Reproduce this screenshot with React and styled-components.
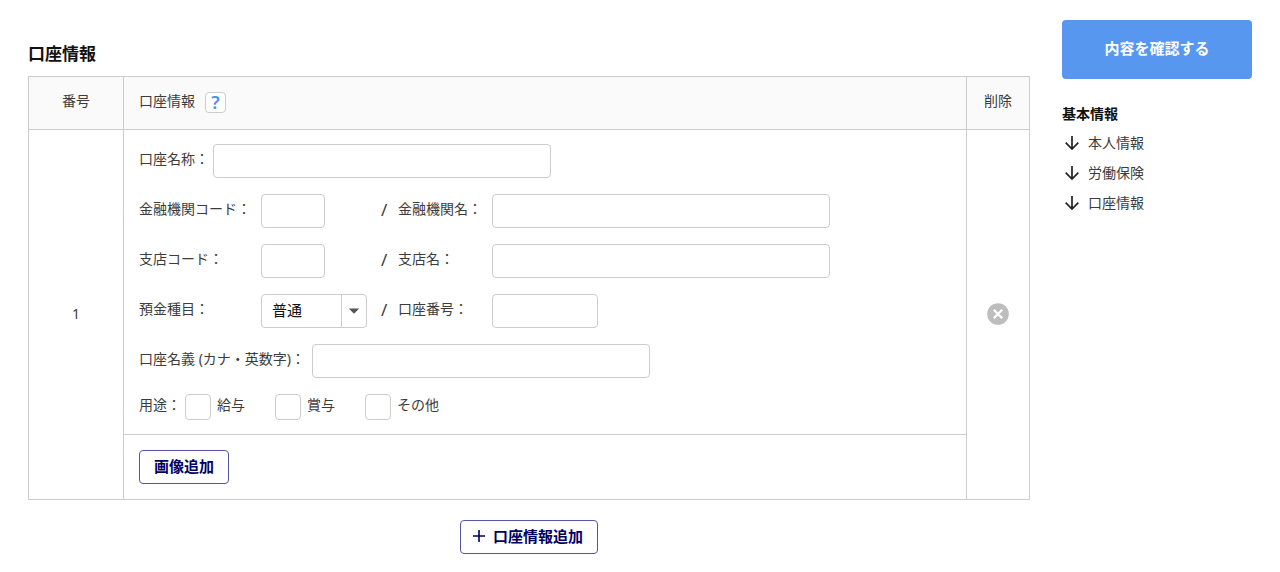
import styled, { createGlobalStyle } from 'styled-components';
import { useState } from 'react';


export default function App(){

    const [kinds, setKinds] = useState({ salary: false, bonus: false, other: false });
    const [accountType, setAccountType] = useState('普通');

function toggleKind(e){
    setKinds({ ...kinds, [e.target.name]: e.target.checked });
}

    return (
        <Page>
            <GlobalStyle />
            <Main>
                <Title>口座情報</Title>
                <Table>
                    <thead>
                        <tr>
                            <NumberHead>番号</NumberHead>
                            <InfoHead>
                                <HeadLine>
                                    <HeadText>口座情報</HeadText>
                                    <HelpButton type="button" aria-label="ヘルプ">?</HelpButton>
                                </HeadLine>
                            </InfoHead>
                            <DeleteHead>削除</DeleteHead>
                        </tr>
                    </thead>
                    <tbody>
                        <tr>
                            <SideCell rowSpan={2}>1</SideCell>
                            <FormCell>
                                <Form>
                                    <Row>
                                        <Label htmlFor="name">口座名称：</Label>
                                        <Input id="name" type="text" $width="338px" />
                                    </Row>
                                    <Row>
                                        <Label htmlFor="bankCode" $width="118px">金融機関コード：</Label>
                                        <Slot><Input id="bankCode" type="text" $width="64px" /></Slot>
                                        <Slash>/</Slash>
                                        <Label htmlFor="bankName" $width="90px">金融機関名：</Label>
                                        <Input id="bankName" type="text" $width="338px" />
                                    </Row>
                                    <Row>
                                        <Label htmlFor="branchCode" $width="118px">支店コード：</Label>
                                        <Slot><Input id="branchCode" type="text" $width="64px" /></Slot>
                                        <Slash>/</Slash>
                                        <Label htmlFor="branchName" $width="90px">支店名：</Label>
                                        <Input id="branchName" type="text" $width="338px" />
                                    </Row>
                                    <Row>
                                        <Label htmlFor="accountType" $width="118px">預金種目：</Label>
                                        <Slot>
                                            <SelectBox>
                                                <Select
                                                    id="accountType"
                                                    value={accountType}
                                                    onChange={(e) => setAccountType(e.target.value)}
                                                >
                                                    <option>普通</option>
                                                </Select>
                                                <Arrow>
                                                    <svg width="12" height="6" viewBox="0 0 12 6" aria-hidden="true">
                                                        <path d="M0.8 0.4h10.4L6 5.8z" fill="#555" />
                                                    </svg>
                                                </Arrow>
                                            </SelectBox>
                                        </Slot>
                                        <Slash>/</Slash>
                                        <Label htmlFor="accountNumber" $width="90px">口座番号：</Label>
                                        <Input id="accountNumber" type="text" $width="106px" />
                                    </Row>
                                    <Row>
                                        <Label htmlFor="holder" $width="169px">口座名義 (カナ・英数字)：</Label>
                                        <Input id="holder" type="text" $width="338px" />
                                    </Row>
                                    <Row>
                                        <Label as="span">用途：</Label>
                                        <Checks>
                                            <Check>
                                                <Checkbox type="checkbox" name="salary" checked={kinds.salary} onChange={toggleKind} />
                                                <CheckText>給与</CheckText>
                                            </Check>
                                            <Check>
                                                <Checkbox type="checkbox" name="bonus" checked={kinds.bonus} onChange={toggleKind} />
                                                <CheckText>賞与</CheckText>
                                            </Check>
                                            <Check>
                                                <Checkbox type="checkbox" name="other" checked={kinds.other} onChange={toggleKind} />
                                                <CheckText>その他</CheckText>
                                            </Check>
                                        </Checks>
                                    </Row>
                                </Form>
                            </FormCell>
                            <SideCell rowSpan={2}>
                                <DeleteButton type="button" aria-label="削除">
                                    <svg width="22" height="22" viewBox="0 0 22 22" aria-hidden="true">
                                        <circle cx="11" cy="11" r="10.8" fill="#bdbdbd" />
                                        <path d="M6.8 6.8l8.4 8.4M15.2 6.8l-8.4 8.4" stroke="#fff" strokeWidth="2.2" />
                                    </svg>
                                </DeleteButton>
                            </SideCell>
                        </tr>
                        <tr>
                            <ImageCell>
                                <OutlineButton type="button">画像追加</OutlineButton>
                            </ImageCell>
                        </tr>
                    </tbody>
                </Table>
                <AddLine>
                    <OutlineButton type="button" $slim>
                        <svg width="12" height="12" viewBox="0 0 12 12" aria-hidden="true">
                            <path d="M6 0v12M0 6h12" stroke="#00005f" strokeWidth="1.6" />
                        </svg>
                        口座情報追加
                    </OutlineButton>
                </AddLine>
            </Main>

            <Side>
                <ConfirmButton type="button">内容を確認する</ConfirmButton>
                <SideTitle>基本情報</SideTitle>
                <nav>
                    <SideLink text="本人情報" />
                    <SideLink text="労働保険" />
                    <SideLink text="口座情報" />
                </nav>
            </Side>
        </Page>
    )
}

function SideLink({ text }){
    return (
        <Anchor href="#">
            <svg width="14" height="14" viewBox="0 0 14 14" aria-hidden="true">
                <path d="M7 0v13M0.7 6.7L7 13l6.3-6.3" fill="none" stroke="#222" strokeWidth="1.7" />
            </svg>
            {text}
        </Anchor>
    )
}

const GlobalStyle = createGlobalStyle`
*{
    box-sizing: border-box;
}
body{
    margin: 0;
    background: #FFFFFF;
    color: #3C3C3C;
    font-family: 'Noto Sans', 'Noto Sans CJK JP', sans-serif;
    font-size: 14px;
    line-height: 20px;
}
button, input, select{
    font-family: inherit;
}
`

const Page = styled.div`
    display: flex;
    align-items: flex-start;
    gap: 32px;
    padding: 20px 28px 16px;
`
const Main = styled.main`
    flex: 1;
    min-width: 0;
`
const Title = styled.h2`
    margin: 22px 0 10px;
    font-size: 17px;
    font-weight: 700;
    line-height: 24px;
    color: #111111;
`
const Table = styled.table`
    width: 100%;
    border-collapse: collapse;
    table-layout: fixed;
`
const HeadCell = styled.th`
    height: 53px;
    padding: 0 0 4px;
    border: 1px solid #CCCCCC;
    background: #FAFAFA;
    font-weight: 400;
    text-align: center;
`
const NumberHead = styled(HeadCell)`
    width: 95px;
`
const InfoHead = styled(HeadCell)`
    padding: 0 15px 2px;
`
const DeleteHead = styled(HeadCell)`
    width: 63px;
`
const HeadLine = styled.div`
    display: flex;
    align-items: center;
    gap: 10px;
`
const HeadText = styled.span`
    padding-bottom: 2px;
`
const HelpButton = styled.button`
    width: 21px;
    height: 21px;
    padding: 0;
    border: 1px solid #CCCCCC;
    border-radius: 4px;
    background: #FFFFFF;
    color: #4A8FF0;
    font-size: 18px;
    font-weight: 600;
    line-height: 18px;
`
const SideCell = styled.td`
    padding: 0 0 2px;
    border: 1px solid #CCCCCC;
    text-align: center;
`
const FormCell = styled.td`
    padding: 14px 15px;
    border: 1px solid #CCCCCC;
`
const ImageCell = styled.td`
    padding: 15px;
    border: 1px solid #CCCCCC;
`
const Form = styled.div`
    display: flex;
    flex-direction: column;
    gap: 16px;
`
const Row = styled.div`
    display: flex;
    align-items: center;
    gap: 4px;
`
const Label = styled.label`
    width: ${(props) => props.$width || 'auto'};
    padding-bottom: 4px;
    white-space: nowrap;
`
const Input = styled.input`
    width: ${(props) => props.$width};
    height: 34px;
    padding: 0 10px;
    border: 1px solid #CCCCCC;
    border-radius: 4px;
    background: #FFFFFF;
    font-size: 15px;
`
const Slot = styled.div`
    display: flex;
    width: 116px;
`
const Slash = styled.span`
    width: 13px;
    padding-bottom: 2px;
    font-size: 17px;
`
const SelectBox = styled.div`
    display: grid;
    grid-template-columns: 79px 25px;
    width: 106px;
    height: 34px;
    border: 1px solid #CCCCCC;
    border-radius: 4px;
`
const Select = styled.select`
    grid-area: 1 / 1 / 2 / 3;
    appearance: none;
    padding: 0 24px 3px 10px;
    border: none;
    background: transparent;
    color: #111111;
    font-size: 15px;
`
const Arrow = styled.span`
    grid-area: 1 / 2 / 2 / 3;
    display: flex;
    align-items: center;
    justify-content: center;
    border-left: 1px solid #CCCCCC;
    pointer-events: none;
`
const Checks = styled.div`
    display: flex;
    gap: 30px;
`
const Check = styled.label`
    display: flex;
    align-items: center;
    gap: 6px;
`
const Checkbox = styled.input`
    appearance: none;
    width: 26px;
    height: 26px;
    margin: 0;
    border: 1px solid #CCCCCC;
    border-radius: 4px;
    background: #FFFFFF;
    &:checked{
        background: #5897F0;
    }
`
const CheckText = styled.span`
    padding-bottom: 4px;
`
const DeleteButton = styled.button`
    display: inline-flex;
    padding: 0;
    border: none;
    background: none;
    vertical-align: middle;
`
const OutlineButton = styled.button`
    display: inline-flex;
    align-items: center;
    gap: 8px;
    height: 34px;
    padding: ${(props) => (props.$slim ? '0 14px 2px 12px' : '0 14px 2px')};
    border: 1px solid #5555A5;
    border-radius: 4px;
    background: #FFFFFF;
    color: #00005F;
    font-size: 15px;
    font-weight: 700;
    line-height: 20px;
    vertical-align: middle;
`
const AddLine = styled.div`
    display: flex;
    justify-content: center;
    margin-top: 20px;
`
const Side = styled.aside`
    width: 190px;
`
const ConfirmButton = styled.button`
    width: 100%;
    height: 59px;
    padding: 0 0 4px;
    border: none;
    border-radius: 4px;
    background: #5897F0;
    color: #FFFFFF;
    font-size: 15px;
    font-weight: 700;
`
const SideTitle = styled.h3`
    margin: 25px 0 4px;
    font-size: 14px;
    font-weight: 700;
    line-height: 20px;
    color: #111111;
`
const Anchor = styled.a`
    display: flex;
    align-items: center;
    gap: 9px;
    padding-left: 3px;
    color: #3C3C3C;
    line-height: 30px;
    text-decoration: none;
`
